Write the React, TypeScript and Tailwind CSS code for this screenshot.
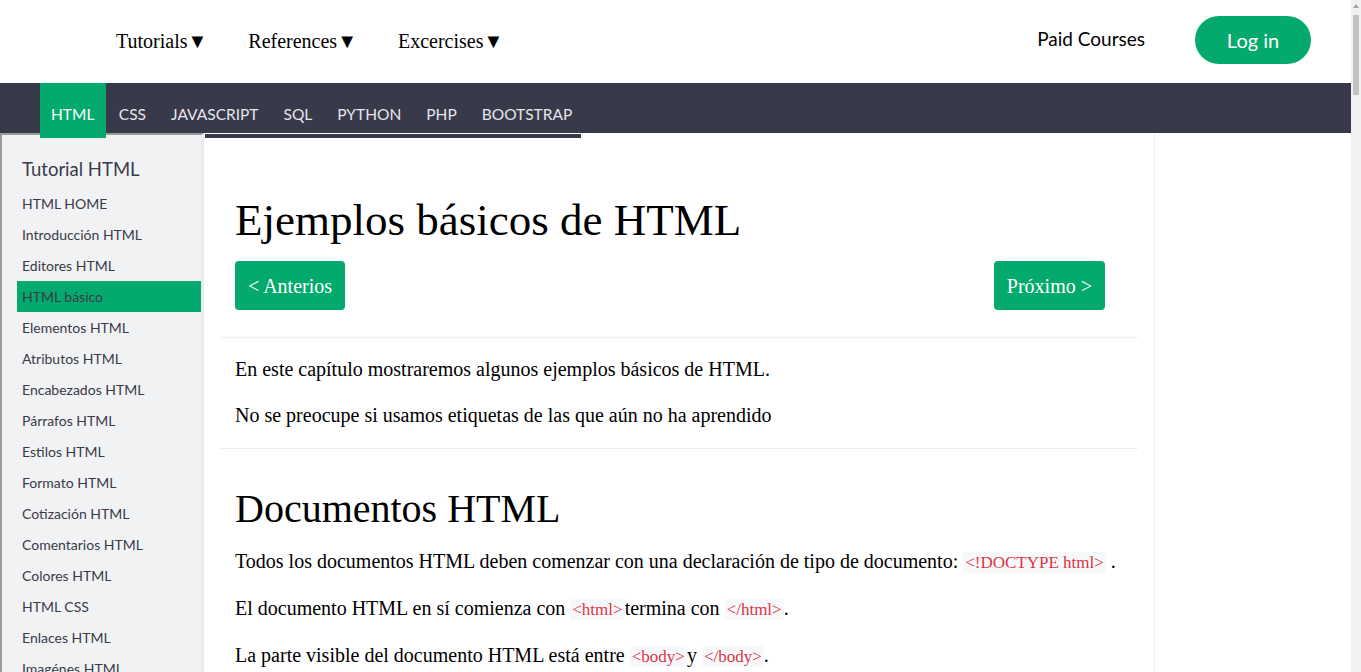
import React from "react";

const serif = { fontFamily: '"Liberation Serif", "Times New Roman", serif' };

const sideItems = [
  "HTML HOME",
  "Introducción HTML",
  "Editores HTML",
  "HTML básico",
  "Elementos HTML",
  "Atributos HTML",
  "Encabezados HTML",
  "Párrafos HTML",
  "Estilos HTML",
  "Formato HTML",
  "Cotización HTML",
  "Comentarios HTML",
  "Colores HTML",
  "HTML CSS",
  "Enlaces HTML",
  "Imagénes HTML",
  "Tablas HTML",
  "Listas HTML",
];

const topics = ["HTML", "CSS", "JAVASCRIPT", "SQL", "PYTHON", "PHP", "BOOTSTRAP"];

function Code({ children }: { children: React.ReactNode }) {
  return (
    <span className="bg-[#f7f8fa] text-[#dc3545] text-[17px] px-[2px] py-[1px]">{children}</span>
  );
}

function Scrollbar() {
  return (
    <div className="w-[10px] shrink-0 bg-[#f1f1f1] flex flex-col items-center">
      <svg width="10" height="12" viewBox="0 0 10 12" className="shrink-0">
        <path d="M5 4 L8 8 L2 8 Z" fill="#a3a3a3" />
      </svg>
      <div className="w-[6px] h-[80px] mt-[3px] rounded-[1px] bg-[#c1c1c1]"></div>
    </div>
  );
}

export default function App() {
  return (
    <div className="flex min-h-[900px] bg-white" style={{ fontFamily: 'Lato, "Noto Sans", sans-serif' }}>
      <div className="flex-1 min-w-0">
        {/* Header */}
        <header className="h-[83px] flex items-center bg-white">
          <nav className="flex items-center ml-[116px] gap-[41px] text-[20px] text-black -mt-[2px]" style={serif}>
            <span>Tutorials▼</span>
            <span>References▼</span>
            <span>Excercises▼</span>
          </nav>
          <div className="ml-auto flex items-center mr-[40px] -mt-[3px]">
            <span className="text-[19px] text-black mr-[50px] -mt-[2px]">Paid Courses</span>
            <button className="w-[116px] h-[48px] rounded-full bg-[#04aa6d] text-white text-[20px]">Log in</button>
          </div>
        </header>

        {/* Topic bar */}
        <div className="h-[50px] bg-[#383949] flex pl-[40px] relative z-10">
          {topics.map((t) => (
            <div
              key={t}
              className={
                t === "HTML"
                  ? "h-[55px] pl-[11px] pr-[12px] pt-[19px] leading-[24px] bg-[#04aa6d] text-white text-[15.5px]"
                  : "h-[50px] px-[12.5px] pt-[19px] leading-[24px] text-[#e6e6ec] text-[15.5px]"
              }
            >
              {t}
            </div>
          ))}
        </div>

        {/* Body */}
        <div className="flex">
          <aside className="w-[204px] shrink-0 bg-[#f1f2f4] border-t-2 border-l-2 border-[#9a9a9a] border-r-[3px] border-r-[#e9eaec] pt-[21px] min-h-[800px]">
            <div className="pl-[20px] text-[18.5px] leading-[26px] text-[#3a3a48] mb-[6px]">Tutorial HTML</div>
            <ul className="ml-[15px]">
              {sideItems.map((s) => (
                <li
                  key={s}
                  className={
                    "h-[31px] flex items-center pl-[5px] text-[14px] text-[#3a3a48] " +
                    (s === "HTML básico" ? "bg-[#04aa6d]" : "")
                  }
                >
                  {s}
                </li>
              ))}
            </ul>
          </aside>

          <main className="w-[951px] shrink-0 border-r border-[#eeeeee]" style={serif}>
            <div className="w-[378px] h-[5px] bg-[#383949] border-t border-l border-r border-white"></div>
            <div className="px-4">
              <div className="px-[15px]">
                <h1 className="text-[45px] leading-[53px] text-black mt-[56px]">Ejemplos básicos de HTML</h1>
                <div className="flex justify-between mt-[14px] pr-[18px]">
                  <button className="h-[49px] px-[13px] bg-[#04aa6d] text-white text-[20px] rounded-[4px]">&lt; Anterios</button>
                  <button className="h-[49px] px-[13px] bg-[#04aa6d] text-white text-[20px] rounded-[4px]">Próximo &gt;</button>
                </div>
              </div>
              <hr className="border-0 border-t border-[#eeeeee] mt-[27px]" />
              <div className="px-[15px] pt-[20px] text-[20px] leading-[23px] text-black">
                <p className="mb-[23px]">En este capítulo mostraremos algunos ejemplos básicos de HTML.</p>
                <p>No se preocupe si usamos etiquetas de las que aún no ha aprendido</p>
              </div>
              <hr className="border-0 border-t border-[#eeeeee] mt-[21px]" />
              <div className="px-[15px] text-black">
                <h2 className="text-[40px] leading-[46px] mt-[37px]">Documentos HTML</h2>
                <div className="text-[20px] leading-[23px]">
                  <p className="mt-[18px]">
                    Todos los documentos HTML deben comenzar con una declaración de tipo de documento: <Code>&lt;!DOCTYPE html&gt;</Code> .
                  </p>
                  <p className="mt-[23px]">
                    El documento HTML en sí comienza con <Code>&lt;html&gt;</Code>termina con <Code>&lt;/html&gt;</Code>.
                  </p>
                  <p className="mt-[23px]">
                    La parte visible del documento HTML está entre <Code>&lt;body&gt;</Code>y <Code>&lt;/body&gt;</Code>.
                  </p>
                  <p className="mt-[23px]">Ejemplo</p>
                </div>
              </div>
            </div>
          </main>
          <div className="flex-1"></div>
        </div>
      </div>
      <Scrollbar />
    </div>
  );
}
